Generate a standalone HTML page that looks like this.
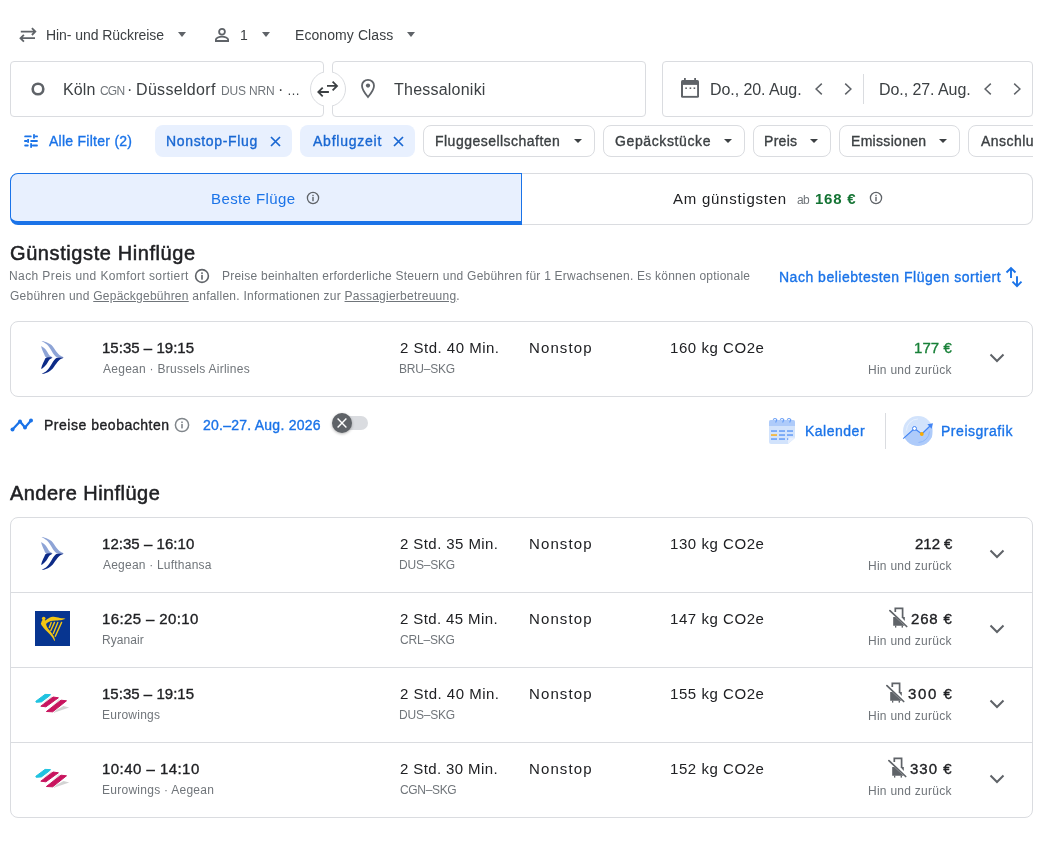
<!DOCTYPE html>
<html><head><meta charset="utf-8"><title>Flüge</title>
<style>
html,body{margin:0;padding:0;background:#fff;}
body{width:1059px;height:843px;position:relative;overflow:hidden;font-family:"Liberation Sans", sans-serif;}
.t{position:absolute;line-height:1;white-space:nowrap;will-change:transform;}
svg{display:block}
</style></head><body>
<svg style="position:absolute;left:16px;top:24px;" width="24" height="22" viewBox="0 0 24 22"><g fill="none" stroke="#5f6368" stroke-width="1.8"><path d="M4.8 7.6H19M15.9 4.2L19.3 7.6L15.9 11"/><path d="M19 14.2H4.8M7.9 10.8L4.5 14.2L7.9 17.6"/></g></svg>
<div class="t" style="top:28px;font-size:14px;color:#3c4043;letter-spacing:-0.059px;left:46.00px;">Hin- und Rückreise</div>
<svg style="position:absolute;left:178px;top:32px;" width="8" height="5" viewBox="0 0 8 5"><path d="M0 0h8L4 5z" fill="#5f6368"/></svg>
<svg style="position:absolute;left:214px;top:28px;" width="16" height="14" viewBox="0 0 16 14"><g fill="none" stroke="#5f6368" stroke-width="1.8"><circle cx="8" cy="3.8" r="2.9"/><path d="M1.9 13V11.5c0-1.6 3.2-2.9 6.1-2.9s6.1 1.3 6.1 2.9V13z"/></g></svg>
<div class="t" style="top:28px;font-size:14px;color:#3c4043;left:240.00px;">1</div>
<svg style="position:absolute;left:262px;top:32px;" width="8" height="5" viewBox="0 0 8 5"><path d="M0 0h8L4 5z" fill="#5f6368"/></svg>
<div class="t" style="top:28px;font-size:14px;color:#3c4043;letter-spacing:0.083px;left:295.00px;">Economy Class</div>
<svg style="position:absolute;left:407px;top:32px;" width="8" height="5" viewBox="0 0 8 5"><path d="M0 0h8L4 5z" fill="#5f6368"/></svg>
<div style="position:absolute;left:10px;top:61px;width:314px;height:56px;box-sizing:border-box;border:1px solid #dadce0;border-radius:4px;background:#fff"></div>
<div style="position:absolute;left:332px;top:61px;width:314px;height:56px;box-sizing:border-box;border:1px solid #dadce0;border-radius:4px;background:#fff"></div>
<div style="position:absolute;left:310px;top:71px;width:36px;height:36px;box-sizing:border-box;border:1px solid #dadce0;border-radius:50%;background:#fff"></div>
<div style="position:absolute;left:324px;top:71px;width:8px;height:36px;background:#fff"></div>
<svg style="position:absolute;left:310px;top:71px;" width="36" height="36" viewBox="0 0 36 36"><g fill="none" stroke="#3c4043" stroke-width="1.8"><path d="M17 14.9h10M22.6 10.6l4.4 4.3-4.4 4.4"/><path d="M18.9 21H8.3M12.7 16.6L8.3 21l4.4 4.4"/></g></svg>
<svg style="position:absolute;left:31px;top:82px;" width="14" height="14" viewBox="0 0 14 14"><circle cx="7" cy="7" r="5.3" fill="none" stroke="#5f6368" stroke-width="2.6"/></svg>
<div class="t" style="top:82px;font-size:16px;color:#3c4043;letter-spacing:0.099px;left:62.70px;">Köln</div>
<div class="t" style="top:85px;font-size:12px;color:#70757a;letter-spacing:-0.800px;left:99.60px;">CGN</div>
<div class="t" style="top:82px;font-size:16px;color:#3c4043;left:127.40px;">·</div>
<div class="t" style="top:82px;font-size:16px;color:#3c4043;letter-spacing:0.321px;left:136.40px;">Düsseldorf</div>
<div class="t" style="top:85px;font-size:12px;color:#70757a;letter-spacing:-0.167px;left:220.60px;">DUS NRN</div>
<div class="t" style="top:82px;font-size:16px;color:#3c4043;left:277.50px;">·</div>
<div class="t" style="top:84px;font-size:13px;color:#3c4043;left:286.50px;">…</div>
<svg style="position:absolute;left:360px;top:78px;" width="16" height="21" viewBox="0 0 16 21"><path d="M8 1.8C4.7 1.8 2 4.4 2 7.7c0 4.2 6 11.3 6 11.3s6-7.1 6-11.3C14 4.4 11.3 1.8 8 1.8z" fill="none" stroke="#5f6368" stroke-width="1.8"/><circle cx="8" cy="7.6" r="2.1" fill="#5f6368"/></svg>
<div class="t" style="top:82px;font-size:16px;color:#3c4043;letter-spacing:0.227px;left:393.50px;">Thessaloniki</div>
<div style="position:absolute;left:662px;top:61px;width:371px;height:56px;box-sizing:border-box;border:1px solid #dadce0;border-radius:4px;background:#fff"></div>
<svg style="position:absolute;left:681px;top:78px;" width="18" height="20" viewBox="0 0 18 20"><rect x="3" y="0" width="1.8" height="3" fill="#5f6368"/><rect x="13.2" y="0" width="1.8" height="3" fill="#5f6368"/><rect x="0" y="2" width="18" height="17.8" rx="1.6" fill="#5f6368"/><rect x="2" y="6.9" width="14.1" height="11" fill="#fff"/><rect x="4.3" y="9.4" width="1.6" height="1.6" fill="#5f6368"/><rect x="8.6" y="9.4" width="1.6" height="1.6" fill="#5f6368"/><rect x="12.6" y="9.4" width="1.6" height="1.6" fill="#5f6368"/></svg>
<div class="t" style="top:82px;font-size:16px;color:#3c4043;letter-spacing:-0.072px;left:709.60px;">Do., 20. Aug.</div>
<svg style="position:absolute;left:815px;top:83px;" width="8" height="12" viewBox="0 0 8 12"><path d="M6.8 0.6L1.1 6l5.7 5.4" fill="none" stroke="#5f6368" stroke-width="1.5"/></svg>
<svg style="position:absolute;left:844px;top:83px;" width="8" height="12" viewBox="0 0 8 12"><path d="M1.2 0.6L6.9 6l-5.7 5.4" fill="none" stroke="#5f6368" stroke-width="1.5"/></svg>
<div style="position:absolute;left:863px;top:74px;width:1px;height:30px;background:#dadce0"></div>
<div class="t" style="top:82px;font-size:16px;color:#3c4043;letter-spacing:-0.069px;left:878.60px;">Do., 27. Aug.</div>
<svg style="position:absolute;left:984px;top:83px;" width="8" height="12" viewBox="0 0 8 12"><path d="M6.8 0.6L1.1 6l5.7 5.4" fill="none" stroke="#5f6368" stroke-width="1.5"/></svg>
<svg style="position:absolute;left:1013px;top:83px;" width="8" height="12" viewBox="0 0 8 12"><path d="M1.2 0.6L6.9 6l-5.7 5.4" fill="none" stroke="#5f6368" stroke-width="1.5"/></svg>
<svg style="position:absolute;left:20px;top:130px;" width="22" height="22" viewBox="0 0 22 22"><g fill="#1a73e8"><rect x="4.2" y="5.5" width="7.5" height="1.8" rx=".9"/><rect x="13.1" y="4.2" width="1.8" height="4.4"/><rect x="14.9" y="5.5" width="3" height="1.8" rx=".5"/><rect x="4.2" y="10.1" width="3.1" height="1.8" rx=".5"/><rect x="7.2" y="9" width="1.8" height="3.8"/><rect x="10.2" y="10.1" width="7.7" height="1.8" rx=".9"/><rect x="4.2" y="14.6" width="4.5" height="1.8" rx=".9"/><rect x="10.2" y="13.2" width="1.8" height="4.6"/><rect x="11.9" y="14.6" width="6" height="1.8" rx=".9"/></g></svg>
<div class="t" style="top:134px;font-size:14px;color:#1a73e8;-webkit-text-stroke:0.35px #1a73e8;letter-spacing:0.262px;left:48.70px;">Alle Filter (2)</div>
<div style="position:absolute;left:155px;top:125px;width:137px;height:32px;background:#e8f0fe;border-radius:8px"></div>
<div class="t" style="top:134px;font-size:14px;color:#1967d2;-webkit-text-stroke:0.35px #1967d2;letter-spacing:0.656px;left:166.30px;">Nonstop-Flug</div>
<svg style="position:absolute;left:270px;top:136px;" width="11" height="11" viewBox="0 0 11 11"><path d="M1 1l9 9M10 1l-9 9" stroke="#1967d2" stroke-width="1.7" fill="none"/></svg>
<div style="position:absolute;left:300px;top:125px;width:115px;height:32px;background:#e8f0fe;border-radius:8px"></div>
<div class="t" style="top:134px;font-size:14px;color:#1967d2;-webkit-text-stroke:0.35px #1967d2;letter-spacing:0.754px;left:312.60px;">Abflugzeit</div>
<svg style="position:absolute;left:393px;top:136px;" width="11" height="11" viewBox="0 0 11 11"><path d="M1 1l9 9M10 1l-9 9" stroke="#1967d2" stroke-width="1.7" fill="none"/></svg>
<div style="position:absolute;left:423px;top:125px;width:172px;height:32px;box-sizing:border-box;border:1px solid #dadce0;border-radius:8px;background:#fff"></div>
<div class="t" style="top:134px;font-size:14px;color:#3c4043;-webkit-text-stroke:0.35px #3c4043;letter-spacing:0.476px;left:435.00px;">Fluggesellschaften</div>
<svg style="position:absolute;left:574px;top:139px;" width="8" height="4" viewBox="0 0 8 4"><path d="M0 0h8L4 4z" fill="#3c4043"/></svg>
<div style="position:absolute;left:603px;top:125px;width:142px;height:32px;box-sizing:border-box;border:1px solid #dadce0;border-radius:8px;background:#fff"></div>
<div class="t" style="top:134px;font-size:14px;color:#3c4043;-webkit-text-stroke:0.35px #3c4043;letter-spacing:0.617px;left:615.00px;">Gepäckstücke</div>
<svg style="position:absolute;left:724px;top:139px;" width="8" height="4" viewBox="0 0 8 4"><path d="M0 0h8L4 4z" fill="#3c4043"/></svg>
<div style="position:absolute;left:753px;top:125px;width:78px;height:32px;box-sizing:border-box;border:1px solid #dadce0;border-radius:8px;background:#fff"></div>
<div class="t" style="top:134px;font-size:14px;color:#3c4043;-webkit-text-stroke:0.35px #3c4043;letter-spacing:0.300px;left:764.00px;">Preis</div>
<svg style="position:absolute;left:810px;top:139px;" width="8" height="4" viewBox="0 0 8 4"><path d="M0 0h8L4 4z" fill="#3c4043"/></svg>
<div style="position:absolute;left:839px;top:125px;width:121px;height:32px;box-sizing:border-box;border:1px solid #dadce0;border-radius:8px;background:#fff"></div>
<div class="t" style="top:134px;font-size:14px;color:#3c4043;-webkit-text-stroke:0.35px #3c4043;letter-spacing:0.310px;left:851.00px;">Emissionen</div>
<svg style="position:absolute;left:939px;top:139px;" width="8" height="4" viewBox="0 0 8 4"><path d="M0 0h8L4 4z" fill="#3c4043"/></svg>
<div style="position:absolute;left:968px;top:125px;width:65px;height:32px;overflow:hidden"><div style="position:absolute;left:0;top:0;width:120px;height:32px;box-sizing:border-box;border:1px solid #dadce0;border-radius:8px"></div><div class="t" style="left:13px;top:9px;font-size:14px;color:#3c4043;-webkit-text-stroke:0.35px #3c4043;letter-spacing:0.45px">Anschlussflüge</div></div>
<div style="position:absolute;left:10px;top:173px;width:512px;height:52px;box-sizing:border-box;border:1px solid #1a73e8;border-right-width:1px;border-radius:8px 0 0 8px;background:#e8f0fe;border-bottom:4px solid #1a73e8"></div>
<div style="position:absolute;left:522px;top:173px;width:511px;height:52px;box-sizing:border-box;border:1px solid #dadce0;border-left:none;border-radius:0 8px 8px 0;background:#fff"></div>
<div class="t" style="top:191px;font-size:15px;color:#1a73e8;letter-spacing:0.400px;left:211.00px;">Beste Flüge</div>
<svg style="position:absolute;left:306px;top:191px;" width="14" height="14" viewBox="0 0 14 14"><circle cx="7" cy="7" r="5.6" fill="none" stroke="#5f6368" stroke-width="1.3"/><rect x="6.3" y="6" width="1.4" height="4.2" fill="#5f6368"/><rect x="6.3" y="3.8" width="1.4" height="1.4" fill="#5f6368"/></svg>
<div class="t" style="top:191px;font-size:15px;color:#202124;letter-spacing:0.751px;left:672.50px;">Am günstigsten</div>
<div class="t" style="top:194px;font-size:12px;color:#70757a;letter-spacing:-0.700px;left:796.50px;">ab</div>
<div class="t" style="top:191px;font-size:15px;color:#137333;font-weight:700;letter-spacing:0.750px;left:815.00px;">168 €</div>
<svg style="position:absolute;left:869px;top:191px;" width="14" height="14" viewBox="0 0 14 14"><circle cx="7" cy="7" r="5.6" fill="none" stroke="#5f6368" stroke-width="1.3"/><rect x="6.3" y="6" width="1.4" height="4.2" fill="#5f6368"/><rect x="6.3" y="3.8" width="1.4" height="1.4" fill="#5f6368"/></svg>
<div class="t" style="top:243px;font-size:20px;color:#202124;-webkit-text-stroke:0.5px #202124;letter-spacing:0.588px;left:10.00px;">Günstigste Hinflüge</div>
<div class="t" style="top:270px;font-size:12px;color:#70757a;letter-spacing:0.400px;left:9.00px;">Nach Preis und Komfort sortiert</div>
<svg style="position:absolute;left:194px;top:268px;" width="16" height="16" viewBox="0 0 14 14"><circle cx="7" cy="7" r="5.6" fill="none" stroke="#5f6368" stroke-width="1.4"/><rect x="6.3" y="6" width="1.4" height="4.2" fill="#5f6368"/><rect x="6.3" y="3.8" width="1.4" height="1.4" fill="#5f6368"/></svg>
<div class="t" style="top:270px;font-size:12px;color:#70757a;letter-spacing:0.233px;left:222.00px;">Preise beinhalten erforderliche Steuern und Gebühren für 1 Erwachsenen. Es können optionale</div>
<div class="t" style="top:290px;font-size:12px;color:#70757a;letter-spacing:0.243px;left:10.00px;">Gebühren und <u>Gepäckgebühren</u> anfallen. Informationen zur <u>Passagierbetreuung</u>.</div>
<div class="t" style="top:270px;font-size:14px;color:#1a73e8;-webkit-text-stroke:0.35px #1a73e8;letter-spacing:0.504px;left:779.20px;">Nach beliebtesten Flügen sortiert</div>
<svg style="position:absolute;left:995px;top:260px;" width="35" height="35" viewBox="0 0 35 35"><g fill="none" stroke="#1a73e8" stroke-width="1.9"><path d="M16 18V8.4M11.5 12.5L16 8l4.5 4.5"/><path d="M22 16.2V26M17.5 21.6L22 26.1l4.5-4.5"/></g></svg>
<div style="position:absolute;left:10px;top:321px;width:1023px;height:76px;box-sizing:border-box;border:1px solid #dadce0;border-radius:8px;background:#fff"></div>
<svg style="position:absolute;left:41px;top:340px;" width="24" height="36" viewBox="0 0 24 36"><path d="M0.70 0.90C1.00 0.82 3.53 1.47 4.90 2.00C6.27 2.53 7.75 3.35 8.90 4.10C10.05 4.85 10.92 5.53 11.80 6.50C12.68 7.47 13.45 8.85 14.20 9.90C14.95 10.95 15.55 11.92 16.30 12.80C17.05 13.68 17.70 14.43 18.70 15.20C19.70 15.97 22.75 17.07 22.30 17.40C21.85 17.73 17.57 17.70 16.00 17.20C14.43 16.70 13.77 15.40 12.90 14.40C12.03 13.40 11.52 12.30 10.80 11.20C10.08 10.10 9.40 8.90 8.60 7.80C7.80 6.70 6.92 5.48 6.00 4.60C5.08 3.72 3.98 3.12 3.10 2.50C2.22 1.88 0.40 0.98 0.70 0.90z" fill="#8ea4d6"/><path d="M0.40 6.20C0.85 6.33 2.30 7.43 3.10 8.10C3.90 8.77 4.58 9.42 5.20 10.20C5.82 10.98 6.23 11.92 6.80 12.80C7.37 13.68 7.87 14.73 8.60 15.50C9.33 16.27 11.77 17.10 11.20 17.40C10.63 17.70 6.55 17.88 5.20 17.30C3.85 16.72 3.72 15.05 3.10 13.90C2.48 12.75 1.95 11.50 1.50 10.40C1.05 9.30 0.58 8.00 0.40 7.30C0.22 6.60 -0.05 6.07 0.40 6.20z" fill="#8ea4d6"/><path d="M0.70 34.10C1.00 34.18 3.53 33.53 4.90 33.00C6.27 32.47 7.75 31.65 8.90 30.90C10.05 30.15 10.92 29.47 11.80 28.50C12.68 27.53 13.45 26.15 14.20 25.10C14.95 24.05 15.55 23.08 16.30 22.20C17.05 21.32 17.70 20.57 18.70 19.80C19.70 19.03 22.75 17.93 22.30 17.60C21.85 17.27 17.57 17.30 16.00 17.80C14.43 18.30 13.77 19.60 12.90 20.60C12.03 21.60 11.52 22.70 10.80 23.80C10.08 24.90 9.40 26.10 8.60 27.20C7.80 28.30 6.92 29.52 6.00 30.40C5.08 31.28 3.98 31.88 3.10 32.50C2.22 33.12 0.40 34.02 0.70 34.10z" fill="#0d2b87"/><path d="M0.40 28.80C0.85 28.67 2.30 27.57 3.10 26.90C3.90 26.23 4.58 25.58 5.20 24.80C5.82 24.02 6.23 23.08 6.80 22.20C7.37 21.32 7.87 20.27 8.60 19.50C9.33 18.73 11.77 17.90 11.20 17.60C10.63 17.30 6.55 17.12 5.20 17.70C3.85 18.28 3.72 19.95 3.10 21.10C2.48 22.25 1.95 23.50 1.50 24.60C1.05 25.70 0.58 27.00 0.40 27.70C0.22 28.40 -0.05 28.93 0.40 28.80z" fill="#0d2b87"/></svg>
<div class="t" style="top:340px;font-size:15px;color:#202124;-webkit-text-stroke:0.35px #202124;letter-spacing:0.024px;left:102.00px;">15:35 – 19:15</div>
<div class="t" style="top:363px;font-size:12px;color:#70757a;letter-spacing:0.264px;left:103.00px;">Aegean · Brussels Airlines</div>
<div class="t" style="top:340px;font-size:15px;color:#202124;letter-spacing:0.499px;left:400.00px;">2 Std. 40 Min.</div>
<div class="t" style="top:363px;font-size:12px;color:#70757a;letter-spacing:-0.202px;left:399.00px;">BRU–SKG</div>
<div class="t" style="top:340px;font-size:15px;color:#202124;letter-spacing:1.116px;left:529.00px;">Nonstop</div>
<div class="t" style="top:340px;font-size:15px;color:#202124;letter-spacing:0.550px;left:669.50px;">160 kg CO2e</div>
<div class="t" style="top:340px;font-size:15px;color:#188038;-webkit-text-stroke:0.35px #188038;letter-spacing:0.050px;right:107.55px;text-align:right;">177 €</div>
<div class="t" style="top:364px;font-size:12px;color:#70757a;letter-spacing:0.260px;right:107.34px;text-align:right;">Hin und zurück</div>
<svg style="position:absolute;left:989px;top:353px;" width="16" height="10" viewBox="0 0 16 10"><path d="M1.5 1.5L8 8l6.5-6.5" fill="none" stroke="#5f6368" stroke-width="2"/></svg>
<svg style="position:absolute;left:10px;top:417px;" width="24" height="16" viewBox="0 0 24 16"><g fill="#1a73e8"><path d="M2.5 12.5L10 4.5l5 6 6-7" stroke="#1a73e8" stroke-width="2.2" fill="none"/><circle cx="2.5" cy="12.5" r="2"/><circle cx="10" cy="4.5" r="2"/><circle cx="15" cy="10.5" r="2"/><circle cx="21" cy="3.5" r="2"/></g></svg>
<div class="t" style="top:418px;font-size:14px;color:#202124;-webkit-text-stroke:0.35px #202124;letter-spacing:0.523px;left:43.60px;">Preise beobachten</div>
<svg style="position:absolute;left:174px;top:417px;" width="16" height="16" viewBox="0 0 16 16"><circle cx="8" cy="8" r="6.6" fill="none" stroke="#80868b" stroke-width="1.5"/><rect x="7.2" y="7" width="1.6" height="4.4" fill="#80868b"/><rect x="7.2" y="4.5" width="1.6" height="1.6" fill="#80868b"/></svg>
<div class="t" style="top:418px;font-size:14px;color:#1a73e8;-webkit-text-stroke:0.35px #1a73e8;letter-spacing:0.242px;left:203.40px;">20.–27. Aug. 2026</div>
<div style="position:absolute;left:334px;top:416px;width:34px;height:13.5px;background:#dadce0;border-radius:7px"></div>
<div style="position:absolute;left:332px;top:413px;width:20px;height:20px;background:#5f6368;border-radius:50%;box-shadow:0 1px 3px rgba(0,0,0,.3)"></div>
<svg style="position:absolute;left:337px;top:418px;" width="10" height="10" viewBox="0 0 10 10"><path d="M0.6 0.6l8.8 8.8M9.4 0.6l-8.8 8.8" stroke="#fff" stroke-width="1.4"/></svg>
<svg style="position:absolute;left:764px;top:412px;" width="36" height="36" viewBox="0 0 36 36"><path d="M7 8h22a2 2 0 0 1 2 2v16l-7 6H7a2 2 0 0 1-2-2V10a2 2 0 0 1 2-2z" fill="#d2e3fc"/><path d="M7 8h22a2 2 0 0 1 2 2v4H5v-4a2 2 0 0 1 2-2z" fill="#aecbfa"/><path d="M31 25.5l-7 6.5v-4.5a2 2 0 0 1 2-2z" fill="#e8f0fe"/><g fill="none" stroke="#669df6" stroke-width="1.1"><path d="M9.2 7.8a1.9 1.9 0 0 1 3.6 0l-1.2 2.6"/><path d="M16.2 7.8a1.9 1.9 0 0 1 3.6 0l-1.2 2.6"/><path d="M23.2 7.8a1.9 1.9 0 0 1 3.6 0l-1.2 2.6"/></g><g fill="#7baaf7"><rect x="7" y="18.1" width="6" height="1.9"/><rect x="15" y="18.1" width="6" height="1.9"/><rect x="23" y="18.1" width="6" height="1.9"/><rect x="15" y="22.1" width="6" height="1.9"/><rect x="23" y="22.1" width="6" height="1.9"/><rect x="7" y="26.1" width="6" height="1.9"/><rect x="15" y="26.1" width="6" height="1.9"/><rect x="23" y="26.1" width="1.2" height="1.9"/></g><rect x="7" y="22.1" width="6" height="1.9" fill="#f0b94a"/></svg>
<div class="t" style="top:424px;font-size:14px;color:#1a73e8;-webkit-text-stroke:0.35px #1a73e8;letter-spacing:0.500px;left:805.00px;">Kalender</div>
<div style="position:absolute;left:885px;top:413px;width:1px;height:36px;background:#dadce0"></div>
<svg style="position:absolute;left:900px;top:413px;" width="36" height="36" viewBox="0 0 36 36"><defs><clipPath id="pc"><circle cx="18" cy="18" r="15"/></clipPath></defs><circle cx="18" cy="18" r="15" fill="#d2e3fc"/><path d="M0 28L14.5 15.5L21.8 21L32 11.5V36H0z" fill="#aecbfa" clip-path="url(#pc)"/><path d="M6.5 17.5A11.5 11.5 0 0 1 18 6" fill="none" stroke="#e8f0fe" stroke-width="0.9"/><path d="M29.5 18.5A11.5 11.5 0 0 1 18.5 29.5" fill="none" stroke="#8ab4f8" stroke-width="0.9"/><path d="M3.2 25.6L14.5 15.5L21.8 21L30 13" fill="none" stroke="#4285f4" stroke-width="1.2"/><path d="M27.4 11.2L33 10.3L31.6 15.8z" fill="#4285f4"/><circle cx="14.5" cy="15.5" r="2" fill="#fff" stroke="#4285f4" stroke-width="1"/><circle cx="21.8" cy="21" r="1.9" fill="#f9ab00"/></svg>
<div class="t" style="top:424px;font-size:14px;color:#1a73e8;-webkit-text-stroke:0.35px #1a73e8;letter-spacing:0.530px;left:940.80px;">Preisgrafik</div>
<div class="t" style="top:483px;font-size:20px;color:#202124;-webkit-text-stroke:0.5px #202124;letter-spacing:0.455px;left:9.80px;">Andere Hinflüge</div>
<div style="position:absolute;left:10px;top:517px;width:1023px;height:301px;box-sizing:border-box;border:1px solid #dadce0;border-radius:8px;background:#fff"></div>
<div style="position:absolute;left:11px;top:592px;width:1021px;height:1px;background:#dadce0"></div>
<div style="position:absolute;left:11px;top:667px;width:1021px;height:1px;background:#dadce0"></div>
<div style="position:absolute;left:11px;top:742px;width:1021px;height:1px;background:#dadce0"></div>
<svg style="position:absolute;left:41px;top:536px;" width="24" height="36" viewBox="0 0 24 36"><path d="M0.70 0.90C1.00 0.82 3.53 1.47 4.90 2.00C6.27 2.53 7.75 3.35 8.90 4.10C10.05 4.85 10.92 5.53 11.80 6.50C12.68 7.47 13.45 8.85 14.20 9.90C14.95 10.95 15.55 11.92 16.30 12.80C17.05 13.68 17.70 14.43 18.70 15.20C19.70 15.97 22.75 17.07 22.30 17.40C21.85 17.73 17.57 17.70 16.00 17.20C14.43 16.70 13.77 15.40 12.90 14.40C12.03 13.40 11.52 12.30 10.80 11.20C10.08 10.10 9.40 8.90 8.60 7.80C7.80 6.70 6.92 5.48 6.00 4.60C5.08 3.72 3.98 3.12 3.10 2.50C2.22 1.88 0.40 0.98 0.70 0.90z" fill="#8ea4d6"/><path d="M0.40 6.20C0.85 6.33 2.30 7.43 3.10 8.10C3.90 8.77 4.58 9.42 5.20 10.20C5.82 10.98 6.23 11.92 6.80 12.80C7.37 13.68 7.87 14.73 8.60 15.50C9.33 16.27 11.77 17.10 11.20 17.40C10.63 17.70 6.55 17.88 5.20 17.30C3.85 16.72 3.72 15.05 3.10 13.90C2.48 12.75 1.95 11.50 1.50 10.40C1.05 9.30 0.58 8.00 0.40 7.30C0.22 6.60 -0.05 6.07 0.40 6.20z" fill="#8ea4d6"/><path d="M0.70 34.10C1.00 34.18 3.53 33.53 4.90 33.00C6.27 32.47 7.75 31.65 8.90 30.90C10.05 30.15 10.92 29.47 11.80 28.50C12.68 27.53 13.45 26.15 14.20 25.10C14.95 24.05 15.55 23.08 16.30 22.20C17.05 21.32 17.70 20.57 18.70 19.80C19.70 19.03 22.75 17.93 22.30 17.60C21.85 17.27 17.57 17.30 16.00 17.80C14.43 18.30 13.77 19.60 12.90 20.60C12.03 21.60 11.52 22.70 10.80 23.80C10.08 24.90 9.40 26.10 8.60 27.20C7.80 28.30 6.92 29.52 6.00 30.40C5.08 31.28 3.98 31.88 3.10 32.50C2.22 33.12 0.40 34.02 0.70 34.10z" fill="#0d2b87"/><path d="M0.40 28.80C0.85 28.67 2.30 27.57 3.10 26.90C3.90 26.23 4.58 25.58 5.20 24.80C5.82 24.02 6.23 23.08 6.80 22.20C7.37 21.32 7.87 20.27 8.60 19.50C9.33 18.73 11.77 17.90 11.20 17.60C10.63 17.30 6.55 17.12 5.20 17.70C3.85 18.28 3.72 19.95 3.10 21.10C2.48 22.25 1.95 23.50 1.50 24.60C1.05 25.70 0.58 27.00 0.40 27.70C0.22 28.40 -0.05 28.93 0.40 28.80z" fill="#0d2b87"/></svg>
<div class="t" style="top:536px;font-size:15px;color:#202124;-webkit-text-stroke:0.35px #202124;letter-spacing:0.042px;left:102.00px;">12:35 – 16:10</div>
<div class="t" style="top:559px;font-size:12px;color:#70757a;letter-spacing:0.215px;left:103.00px;">Aegean · Lufthansa</div>
<div class="t" style="top:536px;font-size:15px;color:#202124;letter-spacing:0.422px;left:400.00px;">2 Std. 35 Min.</div>
<div class="t" style="top:559px;font-size:12px;color:#70757a;letter-spacing:-0.202px;left:399.00px;">DUS–SKG</div>
<div class="t" style="top:536px;font-size:15px;color:#202124;letter-spacing:1.116px;left:529.00px;">Nonstop</div>
<div class="t" style="top:536px;font-size:15px;color:#202124;letter-spacing:0.550px;left:669.50px;">130 kg CO2e</div>
<div class="t" style="top:536px;font-size:15px;color:#202124;-webkit-text-stroke:0.35px #202124;letter-spacing:-0.025px;right:106.62px;text-align:right;">212 €</div>
<div class="t" style="top:560px;font-size:12px;color:#70757a;letter-spacing:0.260px;right:107.34px;text-align:right;">Hin und zurück</div>
<svg style="position:absolute;left:989px;top:549px;" width="16" height="10" viewBox="0 0 16 10"><path d="M1.5 1.5L8 8l6.5-6.5" fill="none" stroke="#5f6368" stroke-width="2"/></svg>
<svg style="position:absolute;left:35px;top:611px;" width="35" height="35" viewBox="0 0 35 35"><rect width="35" height="35" fill="#073590"/><circle cx="8.7" cy="7.5" r="1.8" fill="#f3c613"/><path d="M10.30 9.80C11.02 8.60 13.50 7.07 14.90 6.40C16.30 5.73 17.03 5.72 18.70 5.80C20.37 5.88 22.97 6.60 24.90 6.90C26.83 7.20 29.95 7.27 30.30 7.60C30.65 7.93 28.58 8.60 27.00 8.90C25.42 9.20 22.67 9.20 20.80 9.40C18.93 9.60 17.27 9.67 15.80 10.10C14.33 10.53 12.87 11.42 12.00 12.00C11.13 12.58 10.88 13.97 10.60 13.60C10.32 13.23 9.58 11.00 10.30 9.80z" fill="#f3c613"/><path d="M7.60 8.90C6.88 9.20 6.57 10.73 6.30 11.40C6.03 12.07 5.78 12.20 6.00 12.90C6.22 13.60 6.77 14.48 7.60 15.60C8.43 16.72 9.77 18.30 11.00 19.60C12.23 20.90 13.90 22.20 15.00 23.40C16.10 24.60 16.85 25.70 17.60 26.80C18.35 27.90 19.12 29.70 19.50 30.00C19.88 30.30 20.02 29.37 19.90 28.60C19.78 27.83 19.32 26.47 18.80 25.40C18.28 24.33 17.63 23.33 16.80 22.20C15.97 21.07 14.63 19.73 13.80 18.60C12.97 17.47 12.28 16.47 11.80 15.40C11.32 14.33 11.10 13.17 10.90 12.20C10.70 11.23 11.15 10.15 10.60 9.60C10.05 9.05 8.32 8.60 7.60 8.90z" fill="#f3c613"/><g stroke="#f3c613" stroke-width="1.4" stroke-linecap="round" fill="none"><path d="M16.2 11.4L14.3 16.6"/><path d="M19.5 11.4L15.8 19.5"/><path d="M22.8 11.4L18.3 22.4"/><path d="M26.6 11.4L20.3 25.3"/></g></svg>
<div class="t" style="top:611px;font-size:15px;color:#202124;-webkit-text-stroke:0.35px #202124;letter-spacing:0.375px;left:102.00px;">16:25 – 20:10</div>
<div class="t" style="top:634px;font-size:12px;color:#70757a;letter-spacing:0.083px;left:102.00px;">Ryanair</div>
<div class="t" style="top:611px;font-size:15px;color:#202124;letter-spacing:0.385px;left:400.00px;">2 Std. 45 Min.</div>
<div class="t" style="top:634px;font-size:12px;color:#70757a;letter-spacing:-0.201px;left:400.00px;">CRL–SKG</div>
<div class="t" style="top:611px;font-size:15px;color:#202124;letter-spacing:1.116px;left:529.00px;">Nonstop</div>
<div class="t" style="top:611px;font-size:15px;color:#202124;letter-spacing:0.550px;left:669.50px;">147 kg CO2e</div>
<div class="t" style="top:611px;font-size:15px;color:#202124;-webkit-text-stroke:0.35px #202124;letter-spacing:0.800px;right:106.80px;text-align:right;">268 €</div>
<div class="t" style="top:635px;font-size:12px;color:#70757a;letter-spacing:0.260px;right:107.34px;text-align:right;">Hin und zurück</div>
<svg style="position:absolute;left:882px;top:603px;" width="30" height="30" viewBox="0 0 30 30"><g fill="#5f6368"><path d="M13.3 9V5.3h7.3v8.9" fill="none" stroke="#5f6368" stroke-width="1.7"/><path d="M11.2 14h2.1l9.4 8.8H11.2z"/><path d="M19.4 14h3.4v3.9z"/><rect x="13" y="22.6" width="1.3" height="2"/><rect x="19.6" y="22.6" width="1.4" height="2"/></g><path d="M7.9 7.7L24.7 23.5" stroke="#5f6368" stroke-width="1.7" stroke-linecap="round"/></svg>
<svg style="position:absolute;left:989px;top:624px;" width="16" height="10" viewBox="0 0 16 10"><path d="M1.5 1.5L8 8l6.5-6.5" fill="none" stroke="#5f6368" stroke-width="2"/></svg>
<svg style="position:absolute;left:34px;top:692px;" width="38" height="24" viewBox="0 0 38 24"><path d="M22.3 18.1L29.5 14.1L35.2 15.6L19.1 21z" fill="#c4c4c4" opacity="0.75"/><path d="M9.5 10.6L17 4.4L19.5 5.6L12 11.6z" fill="#d8d8d8" opacity="0.7"/><path d="M16 16.6L24.5 7.3L27 8.2L18 17.6z" fill="#d0d0d0" opacity="0.6"/><g stroke-linejoin="round" stroke-width="1"><path d="M11 2.4L16.5 2.6L15.6 3.8L7.4 9.9L2.2 10.3L1.8 9.3z" fill="#20c3e0" stroke="#20c3e0"/><path d="M19.1 5L24.4 5.8L11.9 14.8L6.8 14.2z" fill="#c8145e" stroke="#c8145e"/><path d="M27 8.2L32.5 8.8L18.7 19.8L12.4 19.5z" fill="#c8145e" stroke="#c8145e"/></g></svg>
<div class="t" style="top:686px;font-size:15px;color:#202124;-webkit-text-stroke:0.35px #202124;letter-spacing:0.024px;left:102.00px;">15:35 – 19:15</div>
<div class="t" style="top:709px;font-size:12px;color:#70757a;letter-spacing:0.250px;left:102.00px;">Eurowings</div>
<div class="t" style="top:686px;font-size:15px;color:#202124;letter-spacing:0.499px;left:400.00px;">2 Std. 40 Min.</div>
<div class="t" style="top:709px;font-size:12px;color:#70757a;letter-spacing:-0.202px;left:399.00px;">DUS–SKG</div>
<div class="t" style="top:686px;font-size:15px;color:#202124;letter-spacing:1.116px;left:529.00px;">Nonstop</div>
<div class="t" style="top:686px;font-size:15px;color:#202124;letter-spacing:0.550px;left:669.50px;">155 kg CO2e</div>
<div class="t" style="top:686px;font-size:15px;color:#202124;-webkit-text-stroke:0.35px #202124;letter-spacing:1.600px;right:105.00px;text-align:right;">300 €</div>
<div class="t" style="top:710px;font-size:12px;color:#70757a;letter-spacing:0.260px;right:107.34px;text-align:right;">Hin und zurück</div>
<svg style="position:absolute;left:879px;top:678px;" width="30" height="30" viewBox="0 0 30 30"><g fill="#5f6368"><path d="M13.3 9V5.3h7.3v8.9" fill="none" stroke="#5f6368" stroke-width="1.7"/><path d="M11.2 14h2.1l9.4 8.8H11.2z"/><path d="M19.4 14h3.4v3.9z"/><rect x="13" y="22.6" width="1.3" height="2"/><rect x="19.6" y="22.6" width="1.4" height="2"/></g><path d="M7.9 7.7L24.7 23.5" stroke="#5f6368" stroke-width="1.7" stroke-linecap="round"/></svg>
<svg style="position:absolute;left:989px;top:699px;" width="16" height="10" viewBox="0 0 16 10"><path d="M1.5 1.5L8 8l6.5-6.5" fill="none" stroke="#5f6368" stroke-width="2"/></svg>
<svg style="position:absolute;left:34px;top:767px;" width="38" height="24" viewBox="0 0 38 24"><path d="M22.3 18.1L29.5 14.1L35.2 15.6L19.1 21z" fill="#c4c4c4" opacity="0.75"/><path d="M9.5 10.6L17 4.4L19.5 5.6L12 11.6z" fill="#d8d8d8" opacity="0.7"/><path d="M16 16.6L24.5 7.3L27 8.2L18 17.6z" fill="#d0d0d0" opacity="0.6"/><g stroke-linejoin="round" stroke-width="1"><path d="M11 2.4L16.5 2.6L15.6 3.8L7.4 9.9L2.2 10.3L1.8 9.3z" fill="#20c3e0" stroke="#20c3e0"/><path d="M19.1 5L24.4 5.8L11.9 14.8L6.8 14.2z" fill="#c8145e" stroke="#c8145e"/><path d="M27 8.2L32.5 8.8L18.7 19.8L12.4 19.5z" fill="#c8145e" stroke="#c8145e"/></g></svg>
<div class="t" style="top:761px;font-size:15px;color:#202124;-webkit-text-stroke:0.35px #202124;letter-spacing:0.458px;left:102.00px;">10:40 – 14:10</div>
<div class="t" style="top:784px;font-size:12px;color:#70757a;letter-spacing:0.265px;left:102.00px;">Eurowings · Aegean</div>
<div class="t" style="top:761px;font-size:15px;color:#202124;letter-spacing:0.385px;left:400.00px;">2 Std. 30 Min.</div>
<div class="t" style="top:784px;font-size:12px;color:#70757a;letter-spacing:-0.333px;left:400.00px;">CGN–SKG</div>
<div class="t" style="top:761px;font-size:15px;color:#202124;letter-spacing:1.116px;left:529.00px;">Nonstop</div>
<div class="t" style="top:761px;font-size:15px;color:#202124;letter-spacing:0.550px;left:669.50px;">152 kg CO2e</div>
<div class="t" style="top:761px;font-size:15px;color:#202124;-webkit-text-stroke:0.35px #202124;letter-spacing:1.025px;right:106.57px;text-align:right;">330 €</div>
<div class="t" style="top:785px;font-size:12px;color:#70757a;letter-spacing:0.260px;right:107.34px;text-align:right;">Hin und zurück</div>
<svg style="position:absolute;left:881px;top:753px;" width="30" height="30" viewBox="0 0 30 30"><g fill="#5f6368"><path d="M13.3 9V5.3h7.3v8.9" fill="none" stroke="#5f6368" stroke-width="1.7"/><path d="M11.2 14h2.1l9.4 8.8H11.2z"/><path d="M19.4 14h3.4v3.9z"/><rect x="13" y="22.6" width="1.3" height="2"/><rect x="19.6" y="22.6" width="1.4" height="2"/></g><path d="M7.9 7.7L24.7 23.5" stroke="#5f6368" stroke-width="1.7" stroke-linecap="round"/></svg>
<svg style="position:absolute;left:989px;top:774px;" width="16" height="10" viewBox="0 0 16 10"><path d="M1.5 1.5L8 8l6.5-6.5" fill="none" stroke="#5f6368" stroke-width="2"/></svg>
</body></html>
